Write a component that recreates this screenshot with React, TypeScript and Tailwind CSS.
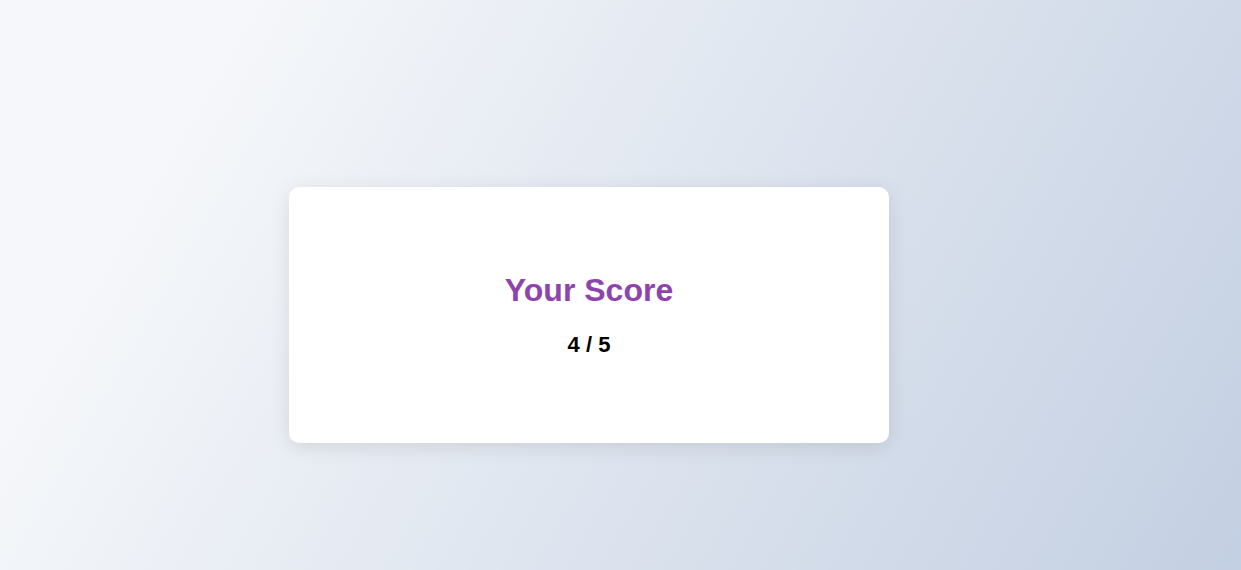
export default function App() {
  return (
    <div
      className="w-[1241px] h-[570px] overflow-hidden bg-[linear-gradient(120deg,#f5f7fa_16%,#c3cfe2_100%)] pl-[289px] pt-[187px]"
      style={{ fontFamily: '"Liberation Sans", Arial, sans-serif' }}
    >
      <div className="w-[600px] h-[256px] bg-white rounded-[10px] shadow-[0_4px_20px_rgba(0,0,0,0.1)] flex flex-col items-center justify-center pb-[3px]">
        <h2 className="text-[32px] leading-[37px] font-bold text-[#8e44ad] mb-[24px]">Your Score</h2>
        <p className="text-[22px] leading-[23px] font-bold text-black">4 / 5</p>
      </div>
    </div>
  )
}
